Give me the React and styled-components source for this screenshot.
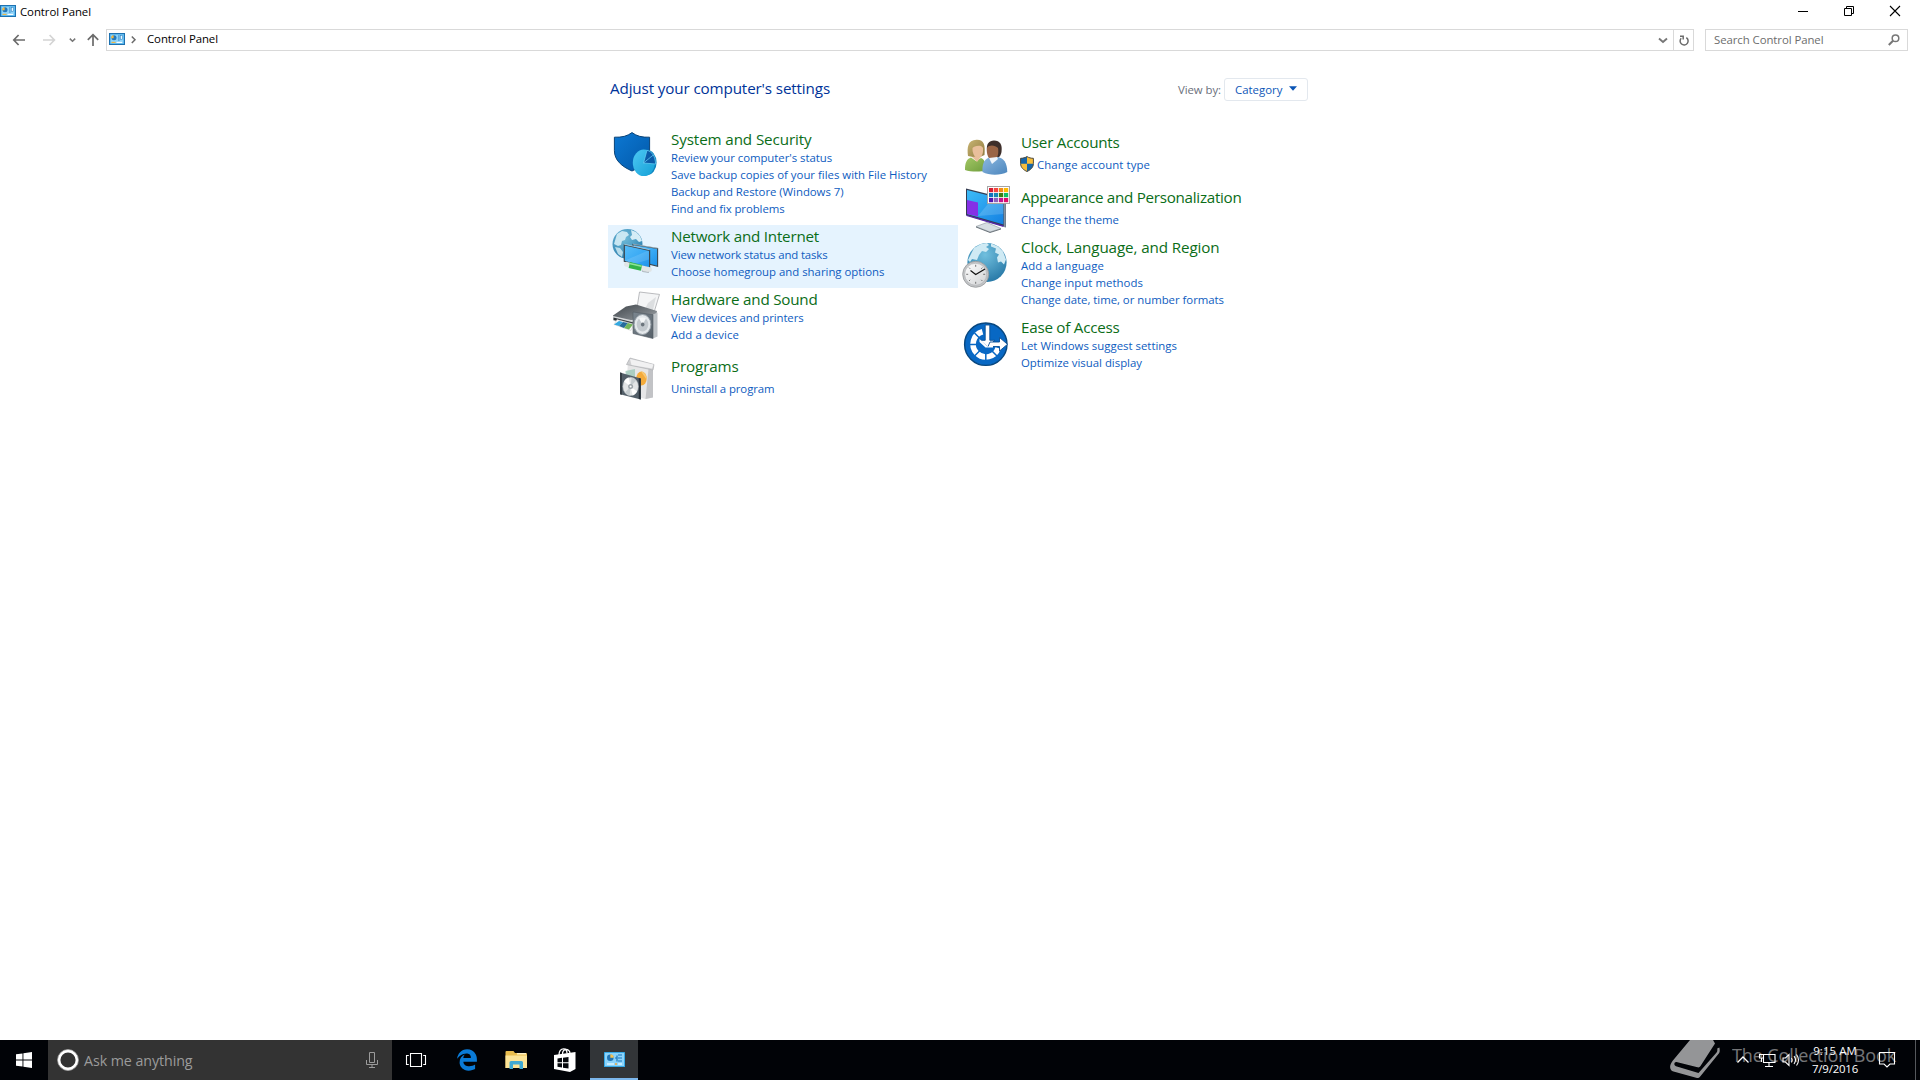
import React from "react";
import styled, { createGlobalStyle } from "styled-components";

const GlobalStyle = createGlobalStyle`
  * { box-sizing: border-box; }
  html, body { margin: 0; padding: 0; background: #fff; overflow: hidden; }
  body { font-family: "Open Sans", "Noto Sans", sans-serif; font-size: 11.4px; }
  svg { display: block; flex: none; overflow: visible; }
`;

const Screen = styled.div`
  width: 1920px;
  height: 1080px;
  display: flex;
  flex-direction: column;
  position: relative;
`;

const Text = styled.span`
  letter-spacing: ${(p) => p.$track || 0}px;
  white-space: pre;
`;

/* ---- window chrome ---- */
const TitleBar = styled.header`
  height: 23px;
  display: flex;
  justify-content: space-between;
  padding-right: 2px;
`;
const TitleLabel = styled.div`
  display: flex;
  gap: 4px;
  line-height: 23px;
  color: #000;
  svg { margin-top: 5px; }
`;
const WindowButtons = styled.div`
  display: flex;
`;
const WindowButton = styled.button`
  width: 46px;
  height: 21px;
  padding: 0;
  border: 0;
  background: none;
  display: flex;
  align-items: center;
  justify-content: center;
`;
const NavRow = styled.nav`
  height: 22px;
  margin: 6px 12px 0 13px;
  display: flex;
`;
const NavGlyphs = styled.div`
  width: 93px;
  height: 22px;
`;
const AddressBox = styled.div`
  width: 1588px;
  height: 22px;
  border: 1px solid #d9d9d9;
  display: flex;
  justify-content: space-between;
`;
const Crumbs = styled.div`
  display: flex;
  padding-left: 2px;
  line-height: 17px;
  color: #000;
`;
const CrumbIcon = styled.div`
  padding-top: 3px;
`;
const CrumbArrow = styled.div`
  padding: 6px 11px 0 6px;
`;
const AddressTools = styled.div`
  display: flex;
`;
const ToolCell = styled.div`
  width: 20px;
  display: flex;
  align-items: center;
  justify-content: center;
  border-left: ${(p) => (p.$divided ? "1px solid #d9d9d9" : "0")};
`;
const SearchBox = styled.div`
  width: 203px;
  height: 22px;
  margin-left: auto;
  border: 1px solid #d9d9d9;
  display: flex;
  justify-content: space-between;
  padding: 0 7px 0 8px;
  line-height: 19px;
  color: #6d6d6d;
  svg { margin-top: 4px; }
`;

/* ---- content ---- */
const Main = styled.main`
  flex: 1;
  width: 700px;
  margin-left: 608px;
  padding-top: 27px;
`;
const ContentHeader = styled.div`
  height: 23px;
  padding-left: 2px;
  display: flex;
  justify-content: space-between;
`;
const PageTitle = styled.h1`
  margin: 0;
  font-size: 15.2px;
  font-weight: 400;
  line-height: 20px;
  color: #003399;
`;
const ViewBy = styled.div`
  display: flex;
  gap: 3px;
  line-height: 23px;
  color: #6a6f7b;
`;
const ViewSelect = styled.button`
  width: 84px;
  height: 23px;
  border: 1px solid #e3e8ee;
  border-radius: 3px;
  background: #fff;
  padding: 0 10px;
  display: flex;
  justify-content: space-between;
  font: inherit;
  line-height: 21px;
  color: #0d57b8;
  svg { margin-top: 7px; }
`;
const Columns = styled.div`
  display: grid;
  grid-template-columns: 350px 350px;
  padding-top: 26px;
  align-items: start;
`;
const Column = styled.div`
  padding-top: ${(p) => p.$offset}px;
`;
const Category = styled.section`
  display: grid;
  grid-template-columns: 48px 1fr;
  column-gap: 11px;
  height: ${(p) => p.$height}px;
  padding-left: 4px;
  background: ${(p) => (p.$hot ? "#e5f3fe" : "transparent")};
`;
const CategoryIcon = styled.div`
  padding-top: ${(p) => p.$top}px;
`;
const CategoryText = styled.div`
  display: flex;
  flex-direction: column;
  padding-top: ${(p) => (p.$single ? 5 : 1)}px;
`;
const CategoryName = styled.h2`
  margin: 0 0 ${(p) => (p.$single ? 4 : 0)}px;
  font-size: 15.2px;
  font-weight: 400;
  line-height: 20px;
  color: #0b6d18;
`;
const Task = styled.a`
  height: 17px;
  line-height: 17px;
  display: flex;
  gap: 3px;
  margin-left: ${(p) => (p.$shield ? -1 : 0)}px;
  color: #0e5cc0;
`;

/* ---- taskbar ---- */
const Taskbar = styled.footer`
  height: 40px;
  background: #010307;
  display: flex;
`;
const StartButton = styled.div`
  width: 48px;
  display: flex;
  align-items: center;
  justify-content: center;
`;
const Cortana = styled.div`
  width: 344px;
  background: #333333;
  display: flex;
  padding: 0 14px 0 9px;
  gap: 5px;
  font-size: 14.25px;
  line-height: 41px;
  color: #9b9b9b;
  svg { margin-top: 9px; }
`;
const MicSlot = styled.div`
  margin-left: auto;
`;
const Apps = styled.div`
  display: flex;
  gap: 1px;
`;
const AppButton = styled.div`
  width: 48px;
  margin-right: ${(p) => p.$after || 0}px;
  display: flex;
  align-items: center;
  justify-content: center;
  background: ${(p) => (p.$active ? "#323538" : "transparent")};
  border-bottom: ${(p) => (p.$active ? "2px solid #7cb7ec" : "0")};
`;
const Tray = styled.div`
  margin-left: auto;
  display: flex;
`;
const TrayItem = styled.div`
  width: ${(p) => p.$w}px;
  margin-right: ${(p) => p.$after}px;
`;
const Clock = styled(TrayItem)`
  display: flex;
  flex-direction: column;
  align-items: center;
  gap: 1px;
  padding-top: 2px;
  line-height: 17px;
  color: #fff;
`;
const ShowDesktop = styled.div`
  width: 5px;
  border-left: 1px solid #55585c;
`;
const Watermark = styled.div`
  position: absolute;
  left: 1660px;
  bottom: 0;
  height: 40px;
  display: flex;
  gap: 2px;
  opacity: 0.58;
  color: #fff;
  font-size: 18px;
  line-height: 24px;
  pointer-events: none;
`;
const WatermarkText = styled(Text)`
  padding-top: 3px;
  opacity: 0.78;
`;

/* ---- icons ---- */
const PanelGlyph = ({ w, h }) => (
  <svg width={w} height={h} viewBox="0 0 16 12">
    <rect x=".5" y=".5" width="15" height="11" fill="#8fd3f8" stroke="#1c6fae" />
    <rect x="1.3" y="1.3" width="13.4" height="9.4" fill="none" stroke="#4cb0ea" strokeWidth=".7" />
    <circle cx="5" cy="4.8" r="2.5" fill="#2379bd" />
    <path d="M4.6 5.2V2.2A2.7 2.7 0 0 0 2.2 5.2z" fill="#f5b63c" />
    <path d="M9 3h1.7M9 5h1.7M9 7h1.7" stroke="#2379bd" strokeWidth=".9" />
    <rect x="11.3" y="2.6" width="2" height="3.6" fill="#eaf8ff" stroke="#2379bd" strokeWidth=".5" />
    <path d="M2.5 9.4h4" stroke="#f5b63c" strokeWidth="1.1" />
    <path d="M7.5 9.4h5.6" stroke="#fff" strokeWidth="1.1" />
  </svg>
);

const TaskbarPanelGlyph = () => (
  <svg width="21" height="15" viewBox="0 0 21 15">
    <rect width="21" height="15" rx=".6" fill="#35a8e6" />
    <rect x="1" y="1" width="19" height="13" fill="#8bd3fa" />
    <circle cx="6.3" cy="5.8" r="3.3" fill="#1f74b5" />
    <path d="M6.3 5.8V2.2A3.5 3.5 0 0 1 9.8 5.8z" fill="#f5c355" />
    <path d="M11 6h2M13 3.5v6M14 3h4M14 6h4M14 9h4" stroke="#1b75ba" strokeWidth="1.2" />
    <path d="M3 12h7" stroke="#e7f7ff" strokeWidth="1.3" />
    <path d="M11 12h2" stroke="#f2a93c" strokeWidth="1.4" />
    <path d="M14 12h4" stroke="#e7f7ff" strokeWidth="1.3" />
  </svg>
);

const NavArrows = () => (
  <svg width="93" height="22" viewBox="0 0 93 22" fill="none" strokeWidth="1.7">
    <path d="M12 11H1M5.6 6L.8 11l4.8 5" stroke="#6b6b6b" />
    <path d="M30 11h11M36.6 6l4.8 5-4.8 5" stroke="#d4d4d4" />
    <path d="M56.8 9.6l2.7 2.7 2.7-2.7" stroke="#777" strokeWidth="1.5" />
    <path d="M80 17V6M74.8 10.8L80 5.6l5.2 5.2" stroke="#6b6b6b" />
  </svg>
);

const Land = () => (
  <g fill="#d5edf6">
    <path d="M5 5l5-3 5 1 2 3-3 2-1 3-3 1-1 4-3 1-4-2z" opacity=".9" />
    <path d="M19 1l5 2 4 4 2 5-3 1-3-3-4 1-2-3 2-2z" />
    <path d="M3 18l5 1 3 4-1 5-4-3z" opacity=".8" />
  </g>
);

const SystemIcon = () => (
  <svg width="48" height="48" viewBox="0 0 48 48">
    <defs>
      <linearGradient id="sys1" x1="0" y1="0" x2="1" y2="1">
        <stop offset="0" stopColor="#0c78d3" />
        <stop offset="1" stopColor="#0258a8" />
      </linearGradient>
      <linearGradient id="sys2" x1="0" y1="0" x2="1" y2="1">
        <stop offset="0" stopColor="#4dc8f4" />
        <stop offset="1" stopColor="#14a0d6" />
      </linearGradient>
    </defs>
    <path d="M20 2.6c4.5 3.4 10 5 17.6 4.6v13.5c0 9.5-7.5 15.8-17.6 20.3C9.8 36.500 2.400 30.200 2.400 20.700V7.200C10 7.600 15.500 6 20 2.600z" fill="url(#sys1)" stroke="#0b4377" strokeWidth="1" />
    <ellipse cx="34.600" cy="32.500" rx="10" ry="12.800" fill="#0e83bd" />
    <ellipse cx="31.800" cy="32.800" rx="11" ry="13.200" fill="url(#sys2)" />
    <path d="M31.500 33L35 20.300c5 1.200 8.300 6 8.600 13.700l-12.100-1z" fill="#0b5ba8" stroke="#6ad2f6" strokeWidth=".7" />
    <path d="M31.500 33L41.300 25" stroke="#6ad2f6" strokeWidth=".7" />
  </svg>
);

const NetworkIcon = () => (
  <svg width="48" height="48" viewBox="0 0 48 48">
    <defs>
      <radialGradient id="glb" cx=".4" cy=".3" r=".75">
        <stop offset="0" stopColor="#6fbbd9" />
        <stop offset="1" stopColor="#2d7fae" />
      </radialGradient>
      <linearGradient id="scr" x1="0" y1="0" x2="1" y2="1">
        <stop offset="0" stopColor="#58bdf8" />
        <stop offset=".55" stopColor="#38a9f4" />
        <stop offset="1" stopColor="#1c90e8" />
      </linearGradient>
    </defs>
    <circle cx="15.500" cy="17" r="15" fill="url(#glb)" />
    <g transform="translate(0 2)"><Land /></g>
    <path d="M21 17.500L45.600 21.500v17.800L21 33z" fill="url(#scr)" stroke="#3a4750" strokeWidth="1.100" />
    <path d="M21 17.200l24.600 4" stroke="#c0d6e3" strokeWidth=".6" />
    <path d="M28.500 38l2 6.500 6 1 1.500-4z" fill="#d8dee2" stroke="#8e999f" strokeWidth=".6" />
    <path d="M12.300 18L37.600 23.400v18.200L12.300 34.400z" fill="url(#scr)" stroke="#3a4750" strokeWidth="1.200" />
    <path d="M12.300 17.300l25.300 5.400" stroke="#c0d6e3" strokeWidth=".7" />
    <path d="M13 33.600L35 24l2 .4v8L22 37z" fill="#fff" opacity=".13" />
    <path d="M14.500 37.300l23 5.200" stroke="#e0e5e6" strokeWidth="4.800" strokeLinecap="round" />
    <path d="M17.300 38l12.200 2.800" stroke="#32b44a" strokeWidth="6" />
    <path d="M17.500 36.500l12.200 2.800" stroke="#8fe396" strokeWidth="1.500" />
  </svg>
);

const HardwareIcon = () => (
  <svg width="48" height="48" viewBox="0 0 48 48">
    <defs>
      <linearGradient id="prn" x1="0" y1="0" x2="1" y2="1">
        <stop offset="0" stopColor="#3f454a" />
        <stop offset=".6" stopColor="#777d82" />
        <stop offset="1" stopColor="#a9aeb2" />
      </linearGradient>
      <linearGradient id="spk" x1="0" y1="0" x2="1" y2="1">
        <stop offset="0" stopColor="#7c8790" />
        <stop offset="1" stopColor="#566069" />
      </linearGradient>
    </defs>
    <path d="M27.500 2l20 2.400-5.500 18-17-4.500z" fill="#f4f5f6" stroke="#a9abae" strokeWidth=".8" />
    <path d="M36 13l8-6-3 13-8-1z" fill="#dcdee0" />
    <path d="M14 16.500l10-2 21 6.500-1 5-36 6L1 29v-3.500z" fill="url(#prn)" />
    <path d="M1 26l20 4.500L44 25v10L22 38 1 30.500z" fill="#d5d8da" />
    <path d="M1.500 27.500l20 5v3l-20-5.500z" fill="#2d3337" />
    <path d="M5 29.500l17 4.500-3 6.500-17-6z" fill="#f8f8f8" stroke="#bbb" strokeWidth=".4" />
    <path d="M7 31l4 1-4 4-5-1.600z" fill="#33a8e0" />
    <path d="M11 32l5 1-4 5-5-2z" fill="#266b9b" />
    <path d="M16 33l5 1.500-4 5-5-1.600z" fill="#73b65a" />
    <path d="M41 24.500l4.500-2v24L41 48.500z" fill="#bfc4c8" />
    <path d="M21 22l20 2.700v23.800l-20-5z" fill="url(#spk)" stroke="#535b63" strokeWidth=".6" />
    <ellipse cx="30.500" cy="34.500" rx="8.400" ry="10" fill="#e4e8eb" stroke="#99a2a9" strokeWidth="1" />
    <ellipse cx="30.500" cy="34.500" rx="5.800" ry="7" fill="#c3c9ce" />
    <path d="M30.500 34.500L27 28.600a6 7 0 0 1 7 0z" fill="#f4f6f7" />
    <ellipse cx="30.700" cy="34.500" rx="1.800" ry="2.100" fill="#6c757d" />
  </svg>
);

const ProgramsIcon = () => (
  <svg width="48" height="48" viewBox="0 0 48 48">
    <path d="M16 6.500l24.500 9.500v27.500l-7 1.500L14 40z" fill="#e6e6e7" />
    <path d="M36.500 15l4.500 1v27.500l-7.500 1.500z" fill="#c2c3c6" />
    <path d="M14.500 10.500L18 4l24 6.500-1 5.500z" fill="#d0d1d3" stroke="#a6a8ab" strokeWidth=".6" />
    <path d="M18 5l1.500 6L40 14.500l1.500-4z" fill="#f1f1f2" />
    <ellipse cx="29.500" cy="24.500" rx="5.200" ry="7" fill="#f4ab3b" />
    <path d="M29 17.500a5.500 7 0 0 1 5.500 8z" fill="#f8c874" />
    <path d="M13.500 17l9.500-2v13l-9 1z" fill="#9cc8b9" opacity=".8" />
    <path d="M8 18.500L28.800 24.500v21L8 40.200z" fill="#535f69" />
    <path d="M8 18.500l2 .6v21.600L8 40.200z" fill="#343d44" />
    <path d="M26.800 24l2 .6v21l-2-.5z" fill="#252e37" />
    <ellipse cx="18.600" cy="32.500" rx="7.800" ry="9.200" fill="#e2e5e6" stroke="#aab0b4" strokeWidth=".5" />
    <path d="M18.600 32.500L12 27.500a8 9 0 0 1 4.500-4zM18.600 32.500l6.500 5a8 9 0 0 1-4.500 4z" fill="#fff" />
    <path d="M18.600 32.500l1-9a7 9 0 0 1 4.500 3zM18.600 32.500l-1 9a7 9 0 0 1-4.500-3z" fill="#c5cccf" />
    <circle cx="18.600" cy="32.500" r="2.500" fill="#9ba3a8" />
    <circle cx="18.600" cy="32.500" r="1" fill="#fff" />
  </svg>
);

const UsersIcon = () => (
  <svg width="48" height="48" viewBox="0 0 48 48">
    <defs>
      <linearGradient id="grn" x1="0" y1="0" x2="1" y2="1">
        <stop offset="0" stopColor="#a3c765" />
        <stop offset="1" stopColor="#6f9d3d" />
      </linearGradient>
      <linearGradient id="blu" x1="0" y1="0" x2="1" y2="1">
        <stop offset="0" stopColor="#8cb8e0" />
        <stop offset="1" stopColor="#4c86bd" />
      </linearGradient>
      <linearGradient id="hr" x1="0" y1="0" x2="1" y2="1">
        <stop offset="0" stopColor="#c8b472" />
        <stop offset="1" stopColor="#8f793f" />
      </linearGradient>
    </defs>
    <path d="M6 26c-1-8-.5-16 8.500-16.200C22 9.500 23.500 15 22.500 25l-7 3z" fill="url(#hr)" />
    <path d="M3 40c0-7 1.500-11 6-12.500l5 3.500 5-3c3 1 5 4.500 5.500 12.500-6 1.500-16 1.500-21.500-.5z" fill="url(#grn)" />
    <path d="M10.500 18c1-2 9-4 10.500 0 .5 5-1 9.500-4.500 10.500-3.500 0-6.500-5.500-6-10.500z" fill="#e9bf9b" />
    <path d="M10 27l5 5 3-4-1-2z" fill="#e9bf9b" />
    <path d="M25 21c-1-7 2-10.500 7-10.500 6 0 8.500 4 7.500 11.500-.5 3-2 5-3 5.500z" fill="#3e2f2b" />
    <path d="M20.500 42c-.5-7 1-12 6.500-14.500l9-.5c5.500 1.500 9 5 9.300 15-7 3.500-18 3.500-24.800 0z" fill="url(#blu)" />
    <path d="M25 18c2-3.500 8-3 11 0 1 6-.5 11-5 12-4 0-7-5-6-12z" fill="#9a6546" />
    <path d="M27 28l3 6 6-5-1-2z" fill="#eef4fa" />
  </svg>
);

const PALETTE = [
  ["#d71c32", "#f4453f", "#ef8b1b", "#ffbb00"],
  ["#1173be", "#1488b4", "#3c7f12", "#0cc065"],
  ["#5413b0", "#8c62bb", "#c31590", "#e00c68"],
];
const AppearanceIcon = () => (
  <svg width="48" height="48" viewBox="0 0 48 48">
    <defs>
      <linearGradient id="mon" x1="0" y1="0" x2="1" y2="1">
        <stop offset="0" stopColor="#3dbcf8" />
        <stop offset="1" stopColor="#1480e2" />
      </linearGradient>
    </defs>
    <path d="M14 42.500l11-4 14 6-11 3.500z" fill="#d6dde2" stroke="#8c959c" strokeWidth=".6" />
    <path d="M14 43l14 5.500L39 45" stroke="#525b63" strokeWidth=".8" fill="none" />
    <path d="M4 4.600l40 10v28.700L4 31.300z" fill="#343b50" />
    <path d="M5 6l36.500 9.300v25.200L5 30z" fill="url(#mon)" />
    <path d="M5 16l11 2.500v14L5 30z" fill="#8530e6" />
    <path d="M16 32l14-17 11.500 3v12z" fill="#fff" opacity=".16" />
    <path d="M4.500 30.800l37 10.800v1.500l-37-11z" fill="#5427a8" />
    <path d="M41.800 15v28l2 .4V15z" fill="#84929f" />
    <rect x="25.500" y="2.500" width="22" height="17" fill="#fff" stroke="#a5a5a5" />
    {PALETTE.map((row, y) =>
      row.map((c, x) => (
        <rect key={c} x={27 + x * 5} y={4 + y * 5} width="4.200" height="4.200" fill={c} />
      ))
    )}
  </svg>
);

const ClockIcon = () => (
  <svg width="48" height="48" viewBox="0 0 48 48">
    <defs>
      <radialGradient id="glb2" cx=".45" cy=".3" r=".7">
        <stop offset="0" stopColor="#70bfde" />
        <stop offset="1" stopColor="#297aa8" />
      </radialGradient>
      <linearGradient id="face" x1="0" y1="0" x2="1" y2="1">
        <stop offset="0" stopColor="#fff" />
        <stop offset="1" stopColor="#cfd1d3" />
      </linearGradient>
    </defs>
    <circle cx="25" cy="22.500" r="19.600" fill="url(#glb2)" />
    <g fill="#cfeaf4">
      <path d="M12 8l7-4 6-1 2 2-3 2 3 2-3 3-4-1-3 4-2 5-5-1-2 3-2-2z" />
      <path d="M29 3.500l7 3 5 5 3 8-2 5-3-3-3 1-1-5 2-3-4-2 1-4-5-2z" />
    </g>
    <circle cx="13.700" cy="34.300" r="13" fill="#c2c4c6" stroke="#97999c" strokeWidth=".8" />
    <circle cx="13.700" cy="34.300" r="11" fill="url(#face)" stroke="#abadb0" strokeWidth=".6" />
    <path d="M13.700 24.800v2M13.700 41.800v2M4.200 34.300h2M21.200 34.300h2M7 27.600l1.200 1.200M20.400 27.600l-1.200 1.200M7 41l1.200-1.200M20.400 41l-1.200-1.200" stroke="#666" strokeWidth=".9" />
    <path d="M8.500 30.500l5.200 4L23 29" stroke="#111" strokeWidth="1.200" fill="none" />
  </svg>
);

const EaseIcon = () => (
  <svg width="48" height="48" viewBox="0 0 48 48">
    <circle cx="23.800" cy="24.200" r="21.200" fill="#0868c4" stroke="#08477f" strokeWidth="1.400" />
    <path d="M20.500 11.800A12.800 12.800 0 1 0 36.100 28" fill="none" stroke="#fff" strokeWidth="5.600" />
    <path d="M8 24.500h8M12.500 13l5.500 5.500M12.500 36l5.500-5.500M23.800 40v-8M35 36l-5.500-5.500" stroke="#0868c4" strokeWidth="1.500" />
    <path d="M23.200 5h4.600v15.300h5L25.500 27l-7.300-6.700h5z" fill="#fff" stroke="#0a4f94" strokeWidth=".9" />
    <path d="M28 22h9.500v-4.500l8 6.800-8 6.700v-4.500H26z" fill="#fff" stroke="#0a4f94" strokeWidth=".9" />
    <path d="M25.500 26.500L17.500 19v3l6 5.500H31V25z" fill="#fff" />
  </svg>
);

const UacShield = () => (
  <svg width="14" height="16" viewBox="0 0 14 16">
    <path d="M7 .6c2 1.200 4 1.700 6.400 1.700v5.200c0 4-3 6.500-6.400 8C3.600 14 .6 11.500.6 7.500V2.300C3 2.300 5 1.800 7 .6z" fill="#f6bd3c" />
    <path d="M7 .6v7.200H.6V2.300C3 2.300 5 1.800 7 .6zM7 7.800h6.400c0 3.800-3 6.200-6.400 7.700z" fill="#1565ab" />
    <path d="M7 .6c2 1.200 4 1.700 6.400 1.700v5.200c0 4-3 6.500-6.400 8C3.600 14 .6 11.500.6 7.500V2.300C3 2.300 5 1.800 7 .6z" fill="none" stroke="#4a4a44" strokeWidth="1" />
  </svg>
);

const BookMark = () => (
  <svg width="70" height="40" viewBox="0 0 70 40">
    <path d="M31 0h22L39 21.500c-.7 1-1.500 1.300-2.600 1L16.500 17.500zM32 2.300l-1.300 1.600 9 2.100 1.300-2z" fill="#fff" fillRule="evenodd" />
    <path d="M31 0h-1L12.500 21c-4 5.500-2.500 9.300 1 10.600l23.500 6.300c1.200.3 2 .1 2.800-.8l19-23.500c1.300-1.700 1-3.500.6-6l-2.200.8c.3 2 .2 3-.8 4.300L38.500 33 16 26.300c-2.500-.8-2-4.500.5-4.200l21 5.200c1.500.3 2.300-.2 3-1.200L55 3.500 53 0z" fill="#fff" fillRule="evenodd" />
  </svg>
);

const LEFT = [
  {
    name: "System and Security", track: -0.112, Icon: SystemIcon, top: 2, height: 97,
    tasks: [
      ["Review your computer's status", -0.049],
      ["Save backup copies of your files with File History", -0.001],
      ["Backup and Restore (Windows 7)", -0.04],
      ["Find and fix problems", -0.082],
    ],
  },
  {
    name: "Network and Internet", track: -0.218, Icon: NetworkIcon, top: 2, height: 63, hot: true,
    tasks: [["View network status and tasks", -0.131], ["Choose homegroup and sharing options", -0.006]],
  },
  {
    name: "Hardware and Sound", track: -0.217, Icon: HardwareIcon, top: 2, height: 63,
    tasks: [["View devices and printers", -0.111], ["Add a device", 0.069]],
  },
  { name: "Programs", track: -0.146, Icon: ProgramsIcon, top: 3, height: 55, tasks: [["Uninstall a program", -0.087]] },
];
const RIGHT = [
  { name: "User Accounts", track: -0.235, Icon: UsersIcon, top: 3, height: 55, tasks: [["Change account type", 0.093, true]] },
  { name: "Appearance and Personalization", track: -0.276, Icon: AppearanceIcon, top: 2, height: 54, tasks: [["Change the theme", 0.013]] },
  {
    name: "Clock, Language, and Region", track: -0.108, Icon: ClockIcon, top: 4, height: 80,
    tasks: [["Add a language", 0.096], ["Change input methods", 0.046], ["Change date, time, or number formats", -0.031]],
  },
  {
    name: "Ease of Access", track: -0.246, Icon: EaseIcon, top: 4, height: 63,
    tasks: [["Let Windows suggest settings", 0.006], ["Optimize visual display", -0.008]],
  },
];

const CategoryRow = ({ name, track, Icon, top, height, hot, tasks }) => {
  const single = tasks.length === 1;
  return (
    <Category $height={height} $hot={hot}>
      <CategoryIcon $top={top}><Icon /></CategoryIcon>
      <CategoryText $single={single}>
        <CategoryName $single={single}><Text $track={track}>{name}</Text></CategoryName>
        {tasks.map(([label, t, shield]) => (
          <Task key={label} $shield={shield}>
            {shield && <UacShield />}
            <Text $track={t}>{label}</Text>
          </Task>
        ))}
      </CategoryText>
    </Category>
  );
};

export default function App() {
  return (
    <Screen>
      <GlobalStyle />
      <TitleBar>
        <TitleLabel>
          <PanelGlyph w={16} h={12} />
          <Text $track={-0.066}>Control Panel</Text>
        </TitleLabel>
        <WindowButtons>
          <WindowButton>
            <svg width="10" height="10"><path d="M0 5.500h10" stroke="#000" /></svg>
          </WindowButton>
          <WindowButton>
            <svg width="10" height="10" fill="none" stroke="#000">
              <path d="M.5 2.500h7v7h-7zM2.500 2.500v-2h7v7h-2" />
            </svg>
          </WindowButton>
          <WindowButton>
            <svg width="10" height="10"><path d="M0 0l10 10M10 0L0 10" stroke="#000" strokeWidth="1.100" /></svg>
          </WindowButton>
        </WindowButtons>
      </TitleBar>
      <NavRow>
        <NavGlyphs><NavArrows /></NavGlyphs>
        <AddressBox>
          <Crumbs>
            <CrumbIcon><PanelGlyph w={16} h={12} /></CrumbIcon>
            <CrumbArrow>
              <svg width="5" height="8"><path d="M.8.500L4 3.800.8 7.100" fill="none" stroke="#6b6b6b" strokeWidth="1.500" /></svg>
            </CrumbArrow>
            <Text $track={-0.066}>Control Panel</Text>
          </Crumbs>
          <AddressTools>
            <ToolCell>
              <svg width="8" height="5"><path d="M0 .5l4 3.500L8 .5" fill="none" stroke="#777" strokeWidth="1.900" /></svg>
            </ToolCell>
            <ToolCell $divided>
              <svg width="10" height="11" fill="none" stroke="#6b6b6b" strokeWidth="1.500">
                <path d="M7.300 2.600A4 4 0 1 1 2.200 3.200M1 1.200h3.200v3.300" />
              </svg>
            </ToolCell>
          </AddressTools>
        </AddressBox>
        <SearchBox>
          <Text $track={-0.069}>Search Control Panel</Text>
          <svg width="12" height="12" fill="none" stroke="#777">
            <circle cx="7.500" cy="4.300" r="3.300" strokeWidth="1.500" />
            <path d="M5 6.800L.8 11" strokeWidth="2" />
          </svg>
        </SearchBox>
      </NavRow>
      <Main>
        <ContentHeader>
          <PageTitle><Text $track={-0.123}>Adjust your computer's settings</Text></PageTitle>
          <ViewBy>
            <Text $track={-0.064}>View by:</Text>
            <ViewSelect>
              <Text $track={0.018}>Category</Text>
              <svg width="8" height="5"><path d="M0 .3h8L4 4.700z" fill="#0b55b5" /></svg>
            </ViewSelect>
          </ViewBy>
        </ContentHeader>
        <Columns>
          <Column $offset={1}>{LEFT.map((c) => <CategoryRow key={c.name} {...c} />)}</Column>
          <Column $offset={0}>{RIGHT.map((c) => <CategoryRow key={c.name} {...c} />)}</Column>
        </Columns>
      </Main>
      <Taskbar>
        <StartButton>
          <svg width="16" height="16" viewBox="0 0 16 16" fill="#fff">
            <path d="M0 2.300L6.500 1.400v6.100H0zM7.400 1.300L16 0v7.500H7.400zM0 8.400h6.500v6.200L0 13.700zM7.400 8.400H16V16l-8.600-1.300z" />
          </svg>
        </StartButton>
        <Cortana>
          <svg width="22" height="22" viewBox="0 0 22 22">
            <circle cx="11" cy="11" r="9" fill="none" stroke="#fff" strokeWidth="2.800" />
            <circle cx="11" cy="11" r="10.500" fill="none" stroke="#aaa" strokeWidth=".7" />
          </svg>
          <Text $track={-0.072}>Ask me anything</Text>
          <MicSlot>
            <svg width="12" height="22" viewBox="0 0 12 22" fill="none" stroke="#9b9b9b">
              <path d="M3.500 3.500h5v10h-5zM.5 11v4.500h11V11M6 15.500v3M3 18.500h6" />
            </svg>
          </MicSlot>
        </Cortana>
        <Apps>
          <AppButton $after={2}>
            <svg width="20" height="14" fill="none" stroke="#fff" strokeWidth="1.100">
              <path d="M4.500.5h11v13h-11zM2.800 2.500H.5v9h2.300M17.200 2.500h2.300v9h-2.300" />
            </svg>
          </AppButton>
          <AppButton>
            <svg width="22" height="22" viewBox="0 0 512 512" fill="#0a7bd8">
              <path d="M486.286 243.671c0-44.032-7.754-84.465-28.801-122.405C416.498 47.879 343.912 8.001 258.893 8.001 118.962 7.724 40.617 113.214 26.056 227.679c42.429-61.312 117.073-121.376 220.375-124.966 0 0 109.666 0 99.419 104.957H169.997c6.369-37.386 18.554-58.986 34.339-78.926-75.048 34.900-121.850 96.096-120.742 188.315.83 71.448 50.124 144.836 120.743 171.976 83.357 31.843 192.776 7.200 240.132-21.324V363.307C363.600 419.948 173.608 424.227 172.255 295.722H486.286z" />
            </svg>
          </AppButton>
          <AppButton>
            <svg width="22" height="18" viewBox="0 0 22 18">
              <path d="M.5 1Q.5 0 1.500 0h7l1.500 2h11Q22 2 22 3v14H.5z" fill="#e9bd4e" />
              <path d="M.5 4.500h21.500v12.500H.5z" fill="#fce497" />
              <path d="M12 2h9v1.500h-9z" fill="#fff3c6" />
              <path d="M4.500 18v-6.500q0-1.500 1.500-1.500h10.500q1.500 0 1.500 1.500V18h-3.500v-4.500h-6.500V18z" fill="#3fa9d2" />
            </svg>
          </AppButton>
          <AppButton>
            <svg width="22" height="24" viewBox="0 0 22 24">
              <path d="M5 7C5 3 7 .8 9.500.8S13 3 13 5.500M8.500 6c0-3 1.500-4.500 3.500-4.500s4 1.500 4 4" fill="none" stroke="#fff" strokeWidth="1.300" />
              <path d="M0 7l21.500-3v17L16 24 0 21z" fill="#fff" />
              <path d="M3.500 10.400l4.500-.6v4.400H3.500zM9 9.700l5.500-.8v5.300H9zM3.500 15.200H8v4.300l-4.500-.7zM9 15.200h5.500v5.300L9 19.700z" fill="#05080c" />
            </svg>
          </AppButton>
          <AppButton $active><TaskbarPanelGlyph /></AppButton>
        </Apps>
        <Tray>
          <TrayItem $w={14} $after={9}>
            <svg width="14" height="40" fill="none" stroke="#fff" strokeWidth="1.300"><path d="M1.500 22.500L7 17l5.500 5.500" /></svg>
          </TrayItem>
          <TrayItem $w={17} $after={6}>
            <svg width="17" height="40" fill="none" stroke="#fff" strokeWidth="1.100">
              <path d="M5 14.500h11v8H4.500V18M.5 14.500h4v3.500h-4zM2.500 18v4M10 22.500v4M6 26.500h8" />
            </svg>
          </TrayItem>
          <TrayItem $w={18} $after={12}>
            <svg width="18" height="40" fill="none" stroke="#fff" strokeWidth="1.100">
              <path d="M1 18h2.500l3.500-3.500v11L3.500 22H1zM9.500 18q1.500 2 0 4.500M12 16.200q3 3.800 0 7.800M14.500 14.500q4 5.500 0 11" />
            </svg>
          </TrayItem>
          <Clock $w={46} $after={20}>
            <Text $track={0.08}>9:15 AM</Text>
            <Text $track={-0.179}>7/9/2016</Text>
          </Clock>
          <TrayItem $w={18} $after={19}>
            <svg width="18" height="40" fill="none" stroke="#fff" strokeWidth="1.100">
              <path d="M1.500 12.500h15v11.500h-4.500l-3 3-3-3h-4.500z" />
            </svg>
          </TrayItem>
          <ShowDesktop />
        </Tray>
      </Taskbar>
      <Watermark>
        <BookMark />
        <WatermarkText $track={-0.103}>The Collection Book</WatermarkText>
      </Watermark>
    </Screen>
  );
}
